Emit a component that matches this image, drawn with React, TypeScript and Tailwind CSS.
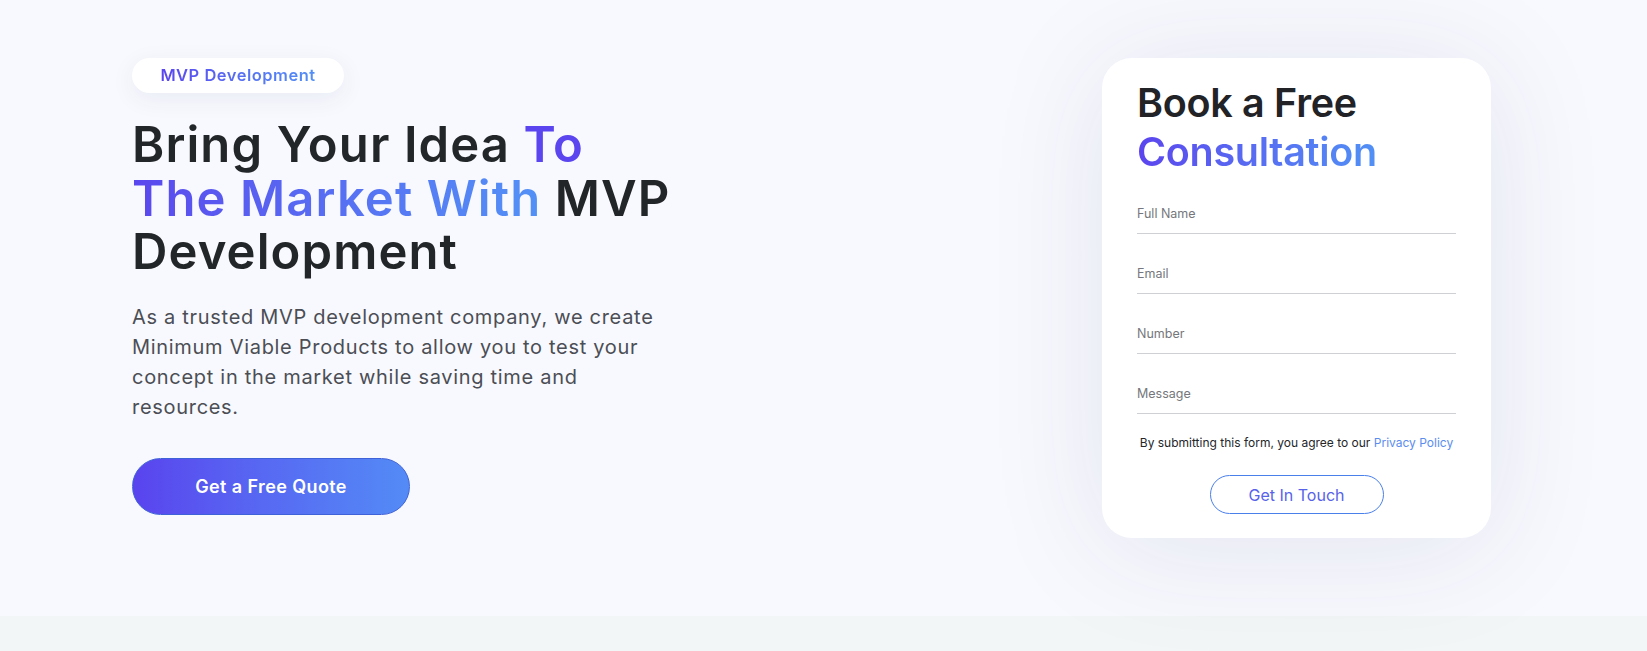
export default function App() {
  const fields = ['Full Name', 'Email', 'Number', 'Message'];
  return (
    <div className="font-['Inter',sans-serif] min-h-[651px] bg-[#f3f6f6]">
      <section className="h-[616px] bg-[#f8f9fe] flex justify-between items-start pt-[58px] pl-[132px] pr-[156px]">
        <div className="w-[580px]">
          <div className="inline-flex h-[35px] w-[212px] items-center justify-center rounded-full bg-white shadow-[0_6px_24px_rgba(40,50,120,0.07)]">
            <span className="bg-gradient-to-r from-[#5b44ee] to-[#5190f5] bg-clip-text text-[16.5px] font-semibold tracking-[0.5px] text-transparent">
              MVP Development
            </span>
          </div>
          <h1 className="mt-[25px] text-[49px] font-semibold leading-[53.5px] tracking-[1.1px] text-[#232629]">
            Bring Your Idea <span className="text-[#5a45ee]">To</span>
            <br />
            <span className="bg-gradient-to-r from-[#5a47ee] to-[#5291f6] bg-clip-text text-transparent">The Market With</span> MVP
            <br />
            Development
          </h1>
          <p className="mt-[23px] text-[20px] leading-[30px] tracking-[0.7px] text-[#4b4e55]">
            As a trusted MVP development company, we create
            <br />
            Minimum Viable Products to allow you to test your
            <br />
            concept in the market while saving time and
            <br />
            resources.
          </p>
          <button className="mt-[36px] flex h-[57px] w-[278px] items-center justify-center rounded-full border border-[#3f62d8] bg-gradient-to-r from-[#5943ee] to-[#538bf6] text-[18px] font-semibold tracking-[0.4px] text-white">
            Get a Free Quote
          </button>
        </div>

        <div className="w-[389px] h-[480px] rounded-[30px] bg-white px-[35px] pt-[21px] shadow-[0_10px_120px_rgba(40,50,110,0.1)]">
          <h2 className="text-[39.5px] font-semibold leading-[49px] tracking-[-0.3px] text-[#222326]">
            Book a Free
            <br />
            <span className="bg-gradient-to-r from-[#5b44ee] to-[#5190f5] bg-clip-text text-transparent">Consultation</span>
          </h2>
          <div className="mt-[28px] flex flex-col gap-[31px]">
            {fields.map((f) => (
              <div key={f} className="flex flex-col">
                <label className="text-[12.5px] leading-[18px] text-[#75777c]">{f}</label>
                <div className="mt-[10px] h-px bg-[#cfd0d3]" />
              </div>
            ))}
          </div>
          <p className="mt-[20px] text-center text-[12px] leading-[18px] text-[#24262a]">
            By submitting this form, you agree to our <span className="text-[#5b8def]">Privacy Policy</span>
          </p>
          <div className="mt-[23px] flex justify-center">
            <button className="h-[39px] w-[174px] rounded-full border border-[#4a80ea] text-[16px] text-[#5863ea]">
              Get In Touch
            </button>
          </div>
        </div>
      </section>
    </div>
  );
}
